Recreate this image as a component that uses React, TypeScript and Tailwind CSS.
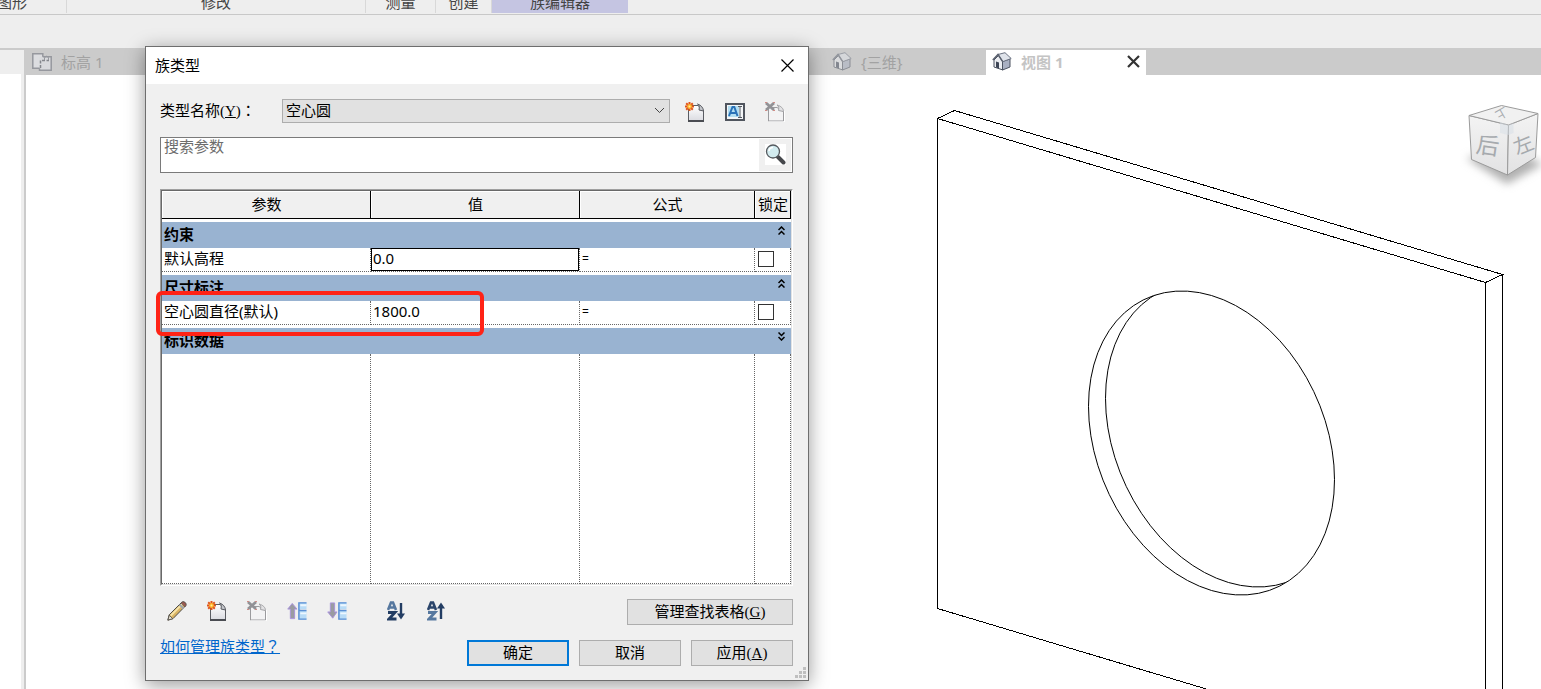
import type { ReactNode } from "react";

const SONG = "font-['Liberation_Serif','Noto_Sans_CJK_SC',sans-serif] font-normal";

function NewIcon() {
  return (
    <svg width="20" height="20" viewBox="0 0 20 20" aria-hidden="true">
      <defs>
        <linearGradient id="page" x1="0" y1="0" x2="0" y2="1">
          <stop offset="0" stopColor="#ffffff" />
          <stop offset="1" stopColor="#d9dae0" />
        </linearGradient>
      </defs>
      <path d="M3.500 3.500H13l5.500 5.500V19.500h-15z" fill="url(#page)" stroke="#5a5c62" />
      <path d="M3 19h16" stroke="#4a4c52" strokeWidth="2" />
      <path d="M12.500 2c2 1 2 3 1.500 6l4.500 1C18.500 6 16 3 12.500 2z" fill="#c4c6cb" stroke="#5a5c62" />
      <g stroke="#e0561b" strokeWidth="2">
        <path d="M4.500 0v9M0 4.500h9M1.200 1.200l6.600 6.600M7.800 1.200L1.200 7.800" />
      </g>
      <circle cx="4.500" cy="4.500" r="2.400" fill="#ffb52e" />
      <circle cx="4.500" cy="4.500" r="1" fill="#fff0a0" />
    </svg>
  );
}

function DeleteIcon() {
  return (
    <svg width="20" height="20" viewBox="0 0 20 20" aria-hidden="true">
      <path d="M3.500 5.500H12l6.500 4V19h-15z" fill="#f3f3f4" stroke="#9b9b9e" />
      <path d="M19.500 9v11H4" fill="none" stroke="#ffffff" />
      <path d="M12 3c2 1 2 3 1.500 5.500l5 1C18.500 6.500 16 4 12 3z" fill="#e2e2e4" stroke="#a4a4a7" />
      <path d="M1 1l8 7M9 1L1 8" stroke="#929296" strokeWidth="2.800" />
      <path d="M0 .5h2M8 .5h2M0 8.500h2M8 8.500h2" stroke="#cf8c86" />
    </svg>
  );
}

function RenameIcon() {
  return (
    <svg width="20" height="20" viewBox="0 0 20 20" aria-hidden="true">
      <rect x="1" y="2" width="18" height="16" fill="#f4f6f8" stroke="#50555e" strokeWidth="2" />
      <rect x="3" y="4" width="11" height="11" fill="#b2def2" />
      <path d="M4 14L7.500 5h1.800L12.500 14M5.500 11h5.500" fill="none" stroke="#2a72b8" strokeWidth="2" />
      <path d="M13 4.500h4M13 15.500h4M15 4.500v11" stroke="#555a62" />
    </svg>
  );
}

function SearchIcon() {
  return (
    <svg width="21" height="21" viewBox="0 0 21 21" aria-hidden="true">
      <rect width="21" height="21" fill="#ffffff" />
      <path d="M13 13l5.500 5.500" stroke="#46484c" strokeWidth="4" strokeLinecap="round" />
      <circle cx="8" cy="7.500" r="6.500" fill="#d2ebef" stroke="#55595e" strokeWidth="1.300" />
      <path d="M4 7a4 4 0 0 1 4-3.500" fill="none" stroke="#ffffff" strokeWidth="1.600" />
    </svg>
  );
}

function PencilIcon() {
  return (
    <svg width="20" height="20" viewBox="0 0 20 20" aria-hidden="true">
      <path d="M.8 19.200l1.400-5.400L14.800 1.200q2-1 3.400.4t.4 3.200L6 17.600z" fill="#d9b465" stroke="#4e4a44" />
      <path d="M3 14L14.500 2.500l1.500 1.300L4.500 15.300z" fill="#f6e3a8" />
      <path d="M14 2l4 4 1-1.500q.5-2-1-3T15 1z" fill="#9c5b50" stroke="#555" strokeWidth=".6" />
      <path d="M12.500 3.500l4 4" stroke="#9fa5ad" strokeWidth="2" />
      <path d="M1 19l1.300-4.700 3.400 3.400z" fill="#ece6d8" stroke="#4e4a44" strokeWidth=".8" />
    </svg>
  );
}

function MoveIcon({ down = false }: { down?: boolean }) {
  return (
    <svg width="21" height="20" viewBox="0 0 21 20" aria-hidden="true">
      <path
        d={down ? "M3.500 1.500h4.500V11h2.500L6 17.500.8 11h2.700z" : "M3.500 18V8H.8L5.500 2l5 6H8v10z"}
        fill="#9a9ba1"
        stroke="#a994dc"
      />
      <path d="M12 1h8.500v7H14v2h6.500v9H12z" fill="#b9dcf7" />
      <path d="M20.500 1.500h-8v17h8M12.500 9.500h8" fill="none" stroke="#5b8fd4" strokeWidth="1.500" />
      <path d="M14 4h6.500M14 12.500h6.500" stroke="#edf7ff" strokeWidth="2" />
    </svg>
  );
}

function SortIcon({ up = false }: { up?: boolean }) {
  return (
    <svg width="18" height="20" viewBox="0 0 18 20" aria-hidden="true">
      <path d="M1 9L4 1.500h2L9 9M2.500 6.500h5" fill="none" stroke={up ? "#2b456b" : "#56789f"} strokeWidth="2.600" />
      <path d="M1 11.500h7L2 18h7.500" fill="none" stroke={up ? "#56789f" : "#233d63"} strokeWidth="2.800" />
      <path d={up ? "M14 18V4" : "M14 2v13"} stroke="#233d63" strokeWidth="2.400" />
      <path d={up ? "M10 7.500L14 1.500l4 6z" : "M10 12.500l4 6 4-6z"} fill="#233d63" />
    </svg>
  );
}

function PlanIcon() {
  return (
    <svg width="20" height="18" viewBox="0 0 20 18" aria-hidden="true">
      <path d="M.8.800h10v14.400H.8z" fill="#dcdde0" stroke="#96989e" strokeWidth="1.500" />
      <path d="M7.500 17.200V3.800h11.700v13.400z" fill="#d9dadd" />
      <path d="M10.800 3.800h8.400v13.400H7.500v-2" fill="none" stroke="#96989e" strokeWidth="1.500" />
      <path d="M8.500 15V7.500H17" fill="none" stroke="#85878d" strokeWidth="1.500" strokeDasharray="3 1.500" />
      <path d="M12.500 7V4.500q2-2.500 4 0V7" fill="none" stroke="#96989e" />
    </svg>
  );
}

function HouseIcon({ faded = false }: { faded?: boolean }) {
  return (
    <svg width="20" height="19" viewBox="0 0 20 19" opacity={faded ? 0.5 : 1} aria-hidden="true">
      <path d="M2 8l5-5 4 6v9l-9-3z" fill="#eceef2" stroke="#4c5361" />
      <path d="M10.500 9.500L18 7v8l-7.500 3z" fill="#a9b0c2" stroke="#4c5361" />
      <path d="M6 2.500L13 .7l6.200 5.800-8.500 3.200z" fill="#dfe3ea" stroke="#6a7180" />
      <path d="M.8 8L6 2.500l4.700 7.200" fill="none" stroke="#59606e" strokeWidth="1.500" />
      <path d="M4 9.500l3 1v6l-3-1z" fill="#3e4656" />
    </svg>
  );
}

function Plate() {
  return (
    <svg
      className="absolute top-0 right-0"
      width="604"
      height="614"
      viewBox="937 75 604 614"
      fill="none"
      stroke="#000000"
      role="img"
      aria-label="空心圆"
    >
      <defs>
        <clipPath id="hole">
          <circle r="1" transform="matrix(123 36.700 0 147.500 1211.500 443)" />
        </clipPath>
      </defs>
      <g shapeRendering="crispEdges">
        <path d="M937.500 118.500L954.500 110.500L1502.500 274.500L1485.500 282.500Z" />
        <path d="M937.500 118v490.500L1208 689.500M1485.500 282v410M1502.500 274v418" />
        <circle r="1" transform="matrix(123 36.700 0 147.500 1211.500 443)" vectorEffect="non-scaling-stroke" />
        <g clipPath="url(#hole)">
          <circle r="1" transform="matrix(123 36.700 0 147.500 1228.500 435)" vectorEffect="non-scaling-stroke" />
        </g>
      </g>
    </svg>
  );
}

function ViewCube() {
  return (
    <svg className="absolute top-[20px] right-0" width="81" height="100" viewBox="1460 95 81 100" role="img" aria-label="ViewCube">
      <defs>
        <linearGradient id="face" x1="0" y1="0" x2="0" y2="1">
          <stop offset="0" stopColor="#f3f3f3" />
          <stop offset="1" stopColor="#e2e2e3" />
        </linearGradient>
        <filter id="soft" x="-30%" y="-30%" width="160%" height="160%">
          <feGaussianBlur stdDeviation="4" />
        </filter>
      </defs>
      <path d="M1466 158l41 26 36-20-30-14z" fill="#b0b0b0" filter="url(#soft)" />
      <path d="M1469 115.500l39.500 9.500-1 50-36-15.500z" fill="url(#face)" stroke="#9b9b9b" />
      <path d="M1508.500 125l29.500-11.500-2.500 44-28 17.500z" fill="url(#face)" stroke="#9b9b9b" />
      <path d="M1469 115.500l32.500-10 36.500 8-29.500 11.500z" fill="#f1f1f1" stroke="#9b9b9b" />
      <path d="M1500 122l8.500 3 5-2v10l-5 2-8.500-2z" fill="#d5dde6" opacity=".5" />
      <g className="font-['Noto_Sans_CJK_SC',sans-serif]" fill="#a6aaae" textAnchor="middle">
        <text x="1488" y="154" fontSize="23" transform="rotate(8 1488 145)">后</text>
        <text x="1523" y="152" fontSize="20" transform="rotate(-22 1523 144)">左</text>
        <text x="1502" y="119" fontSize="12" transform="rotate(150 1502 114)">上</text>
      </g>
    </svg>
  );
}

function RibbonPanel({ title, width, active = false }: { title: string; width: string; active?: boolean }) {
  return (
    <div
      className={`${width} flex shrink-0 items-end justify-center leading-[22px] ${
        active ? "bg-[#c5c5e2]" : "border-r border-[#d8d8d8]"
      }`}
    >
      {title}
    </div>
  );
}

function IconButton({ label, children }: { label: string; children: ReactNode }) {
  return (
    <button type="button" aria-label={label} className="flex w-5 shrink-0 items-center justify-center">
      {children}
    </button>
  );
}

function PushButton({ width, primary = false, children }: { width: string; primary?: boolean; children: ReactNode }) {
  return (
    <button
      type="button"
      className={`${width} ${SONG} h-[26px] bg-[#e1e1e1] pb-px text-[15px] leading-5 ${
        primary ? "border-2 border-[#0078d7]" : "border border-[#adadad]"
      }`}
    >
      {children}
    </button>
  );
}

function SectionRow({ title, collapsed = false }: { title: string; collapsed?: boolean }) {
  return (
    <tr>
      <th colSpan={4} scope="colgroup" className="h-[29px] border-t-[3px] border-white bg-[#99b3d1] p-0 text-left font-bold">
        <div className="flex h-[26px] items-start justify-between pr-[6px] pl-[2px] leading-6">
          {title}
          <button type="button" aria-label={title} aria-expanded={!collapsed} className="pt-1">
            <svg width="7" height="9" viewBox="0 0 7 9" fill="none" stroke="#000000" strokeWidth="1.500" aria-hidden="true">
              <path d={collapsed ? "M.5.500l3 3 3-3M.5 5l3 3 3-3" : "M.5 4l3-3 3 3M.5 8.500l3-3 3 3"} />
            </svg>
          </button>
        </div>
      </th>
    </tr>
  );
}

function ParamRow({ name, value, focused = false }: { name: string; value: string; focused?: boolean }) {
  const cell = "h-6 border-r border-b border-dotted border-[#666666] p-0 align-top leading-5";
  return (
    <tr>
      <td className={`${cell} pl-[2px]`}>{name}</td>
      <td className={cell}>
        <input
          aria-label={name}
          defaultValue={value}
          className={`block h-[23px] w-full border pb-[3px] pl-px outline-none ${focused ? "border-black" : "border-transparent"}`}
        />
      </td>
      <td className={`${cell} pl-[2px]`}>
        <div className="text-xs leading-[22px]">=</div>
      </td>
      <td className={`${cell} pt-[3px] pl-[3px]`}>
        <input
          type="checkbox"
          aria-label={`锁定 ${name}`}
          className="block size-4 appearance-none border border-[#333333] bg-white"
        />
      </td>
    </tr>
  );
}

function ParamTable() {
  const head = "h-7 border-r border-b border-black bg-[#f0f0f0] p-0 pb-[2px] pl-px font-normal shadow-[inset_1px_1px_0_#fff]";
  const blank = "h-[230px] border-r border-b border-dotted border-[#666666] p-0";
  return (
    <div className="relative mt-4 border border-t-[#a0a0a0] border-r-white border-b-white border-l-[#a0a0a0]">
      <div className="border border-t-[#696969] border-r-[#e3e3e3] border-b-[#e3e3e3] border-l-[#696969] bg-white">
        <table className="w-full table-fixed border-separate border-spacing-0">
          <colgroup>
            <col className="w-[209px]" />
            <col className="w-[209px]" />
            <col />
            <col className="w-9" />
          </colgroup>
          <thead>
            <tr>
              <th className={head}>参数</th>
              <th className={head}>值</th>
              <th className={head}>公式</th>
              <th className={head}>锁定</th>
            </tr>
          </thead>
          <tbody>
            <SectionRow title="约束" />
            <ParamRow name="默认高程" value="0.0" focused />
            <SectionRow title="尺寸标注" />
            <ParamRow name="空心圆直径(默认)" value="1800.0" />
            <SectionRow title="标识数据" collapsed />
            <tr>
              <td className={blank} />
              <td className={blank} />
              <td className={blank} />
              <td className={blank} />
            </tr>
          </tbody>
        </table>
      </div>
      {/* highlight around the diameter parameter */}
      <div className="pointer-events-none absolute top-[101px] -left-[5px] h-[45px] w-[328px] rounded-md border-4 border-[#ff2316]" />
    </div>
  );
}

function FamilyTypesDialog() {
  return (
    <section
      role="dialog"
      aria-labelledby="dialog-title"
      className="absolute top-[46px] left-[145px] w-[664px] border border-[#6e6e6e] bg-[#f0f0f0] shadow-[0_4px_18px_rgba(0,0,0,0.4)]"
    >
      <header className="flex h-[37px] items-center justify-between bg-white pr-[14px] pb-px pl-[9px]">
        <h1 id="dialog-title">族类型</h1>
        <button type="button" aria-label="关闭">
          <svg width="13" height="13" viewBox="0 0 13 13" stroke="#000000" strokeWidth="1.200" aria-hidden="true">
            <path d="M.5.500l12 12M12.500.500l-12 12" />
          </svg>
        </button>
      </header>

      <div className="pt-[15px] pr-[15px] pb-[14px] pl-[14px]">
        <div className="flex h-6 items-center">
          <label htmlFor="type-name" className={`${SONG} w-[122px] shrink-0 pb-px`}>
            类型名称(<u>Y</u>)
            <span className="font-['Noto_Sans_CJK_TC',sans-serif]">：</span>
          </label>
          <div className="relative min-w-0 flex-1">
            <select
              id="type-name"
              className={`${SONG} block h-6 w-full appearance-none border border-[#adadad] bg-[#e1e1e1] pb-px pl-[3px] leading-5`}
            >
              <option>空心圆</option>
            </select>
            <svg className="pointer-events-none absolute top-2 right-[5px]" width="11" height="7" viewBox="0 0 11 7" fill="none" stroke="#444444" aria-hidden="true">
              <path d="M1 1l4.500 4.500L10 1" />
            </svg>
          </div>
          <div className="flex gap-5 pt-[2px] pr-2 pl-[15px]">
            <IconButton label="新建类型"><NewIcon /></IconButton>
            <IconButton label="重命名类型"><RenameIcon /></IconButton>
            <IconButton label="删除类型"><DeleteIcon /></IconButton>
          </div>
        </div>

        <div className="mt-[14px] flex h-9 items-start border border-[#7a7a7a] bg-white">
          <input
            type="search"
            aria-label="搜索参数"
            placeholder="搜索参数"
            className={`${SONG} h-[18px] min-w-0 flex-1 pl-[3px] outline-none placeholder:text-[#6d6d6d]`}
          />
          <button type="button" aria-label="搜索" className="m-px flex h-8 w-8 items-center justify-center bg-[#f0f0f0] pb-[2px]">
            <SearchIcon />
          </button>
        </div>

        <ParamTable />

        <div className="mt-[13px] flex h-[26px] items-center justify-between">
          <div className="flex gap-5 pb-[2px] pl-[7px]">
            <IconButton label="编辑参数"><PencilIcon /></IconButton>
            <IconButton label="新建参数"><NewIcon /></IconButton>
            <IconButton label="删除参数"><DeleteIcon /></IconButton>
            <IconButton label="上移"><MoveIcon /></IconButton>
            <IconButton label="下移"><MoveIcon down /></IconButton>
            <div className="flex gap-5 pl-[19px]">
              <IconButton label="按升序排序"><SortIcon /></IconButton>
              <IconButton label="按降序排序"><SortIcon up /></IconButton>
            </div>
          </div>
          <PushButton width="w-[166px]">管理查找表格(<u>G</u>)</PushButton>
        </div>

        <div className="mt-[15px] flex items-start justify-between">
          <a href="#help" className={`${SONG} leading-3 text-[#0066cc] underline`}>
            如何管理族类型<span className="font-['Noto_Sans_CJK_TC',sans-serif]">？</span>
          </a>
          <div className="flex gap-[10px]">
            <PushButton width="w-[102px]" primary>确定</PushButton>
            <PushButton width="w-[102px]">取消</PushButton>
            <PushButton width="w-[102px]">应用(<u>A</u>)</PushButton>
          </div>
        </div>
      </div>

      <svg className="absolute right-[2px] bottom-[2px]" width="11" height="11" viewBox="0 0 11 11" fill="#bfbfbf" aria-hidden="true">
        <path d="M8 0h3v3H8zM4 4h3v3H4zM8 4h3v3H8zM0 8h3v3H0zM4 8h3v3H4zM8 8h3v3H8z" />
      </svg>
    </section>
  );
}

export default function App() {
  return (
    <div className="relative flex min-h-screen flex-col overflow-hidden bg-[#eeeeee] font-['Noto_Sans','Noto_Sans_CJK_SC',sans-serif] text-[15px] leading-5 text-black">
      <div className="flex h-[15px] overflow-hidden border-b border-[#c8c8c8] pb-px text-[#444444]">
        <div className="-ml-[42px] flex">
          <RibbonPanel title="图形" width="w-[109px]" />
          <RibbonPanel title="修改" width="w-[299px]" />
          <RibbonPanel title="测量" width="w-[70px]" />
          <RibbonPanel title="创建" width="w-[56px]" />
          <RibbonPanel title="族编辑器" width="w-[136px]" active />
        </div>
      </div>
      <div className="h-[33px]" />

      <div className="flex flex-1 border-t-2 border-[#cbcbcb]">
        <aside className="flex w-6 shrink-0 flex-col">
          <div className="h-6" />
          <div className="mr-[3px] flex-1 bg-white" />
        </aside>
        <main className="flex min-w-0 flex-1 flex-col border-l-2 border-[#cbcbcb]">
          <nav className="flex h-[25px] shrink-0 bg-[#cbcbcb] text-[#a2a2a2]">
            <a href="#level-1" className="flex w-40 items-center gap-[9px] pb-[2px] pl-[6px]">
              <PlanIcon />
              标高 1
            </a>
            <a href="#3d" className="ml-[640px] flex w-40 items-center gap-[9px] pb-[2px] pl-[6px]">
              <HouseIcon faded />
              {"{三维}"}
            </a>
            <div className="flex w-40 items-center justify-between bg-white pr-[6px] pb-[2px] pl-[6px]">
              <a href="#view-1" aria-current="page" className="flex items-center gap-[9px] font-bold text-[#c4c4c4]">
                <HouseIcon />
                视图 1
              </a>
              <button type="button" aria-label="关闭视图">
                <svg width="13" height="13" viewBox="0 0 13 13" stroke="#333333" strokeWidth="2.200" aria-hidden="true">
                  <path d="M1 1l11 11M12 1L1 12" />
                </svg>
              </button>
            </div>
          </nav>
          <div className="relative flex-1 overflow-hidden bg-white">
            <Plate />
            <ViewCube />
          </div>
        </main>
      </div>

      <FamilyTypesDialog />
    </div>
  );
}
